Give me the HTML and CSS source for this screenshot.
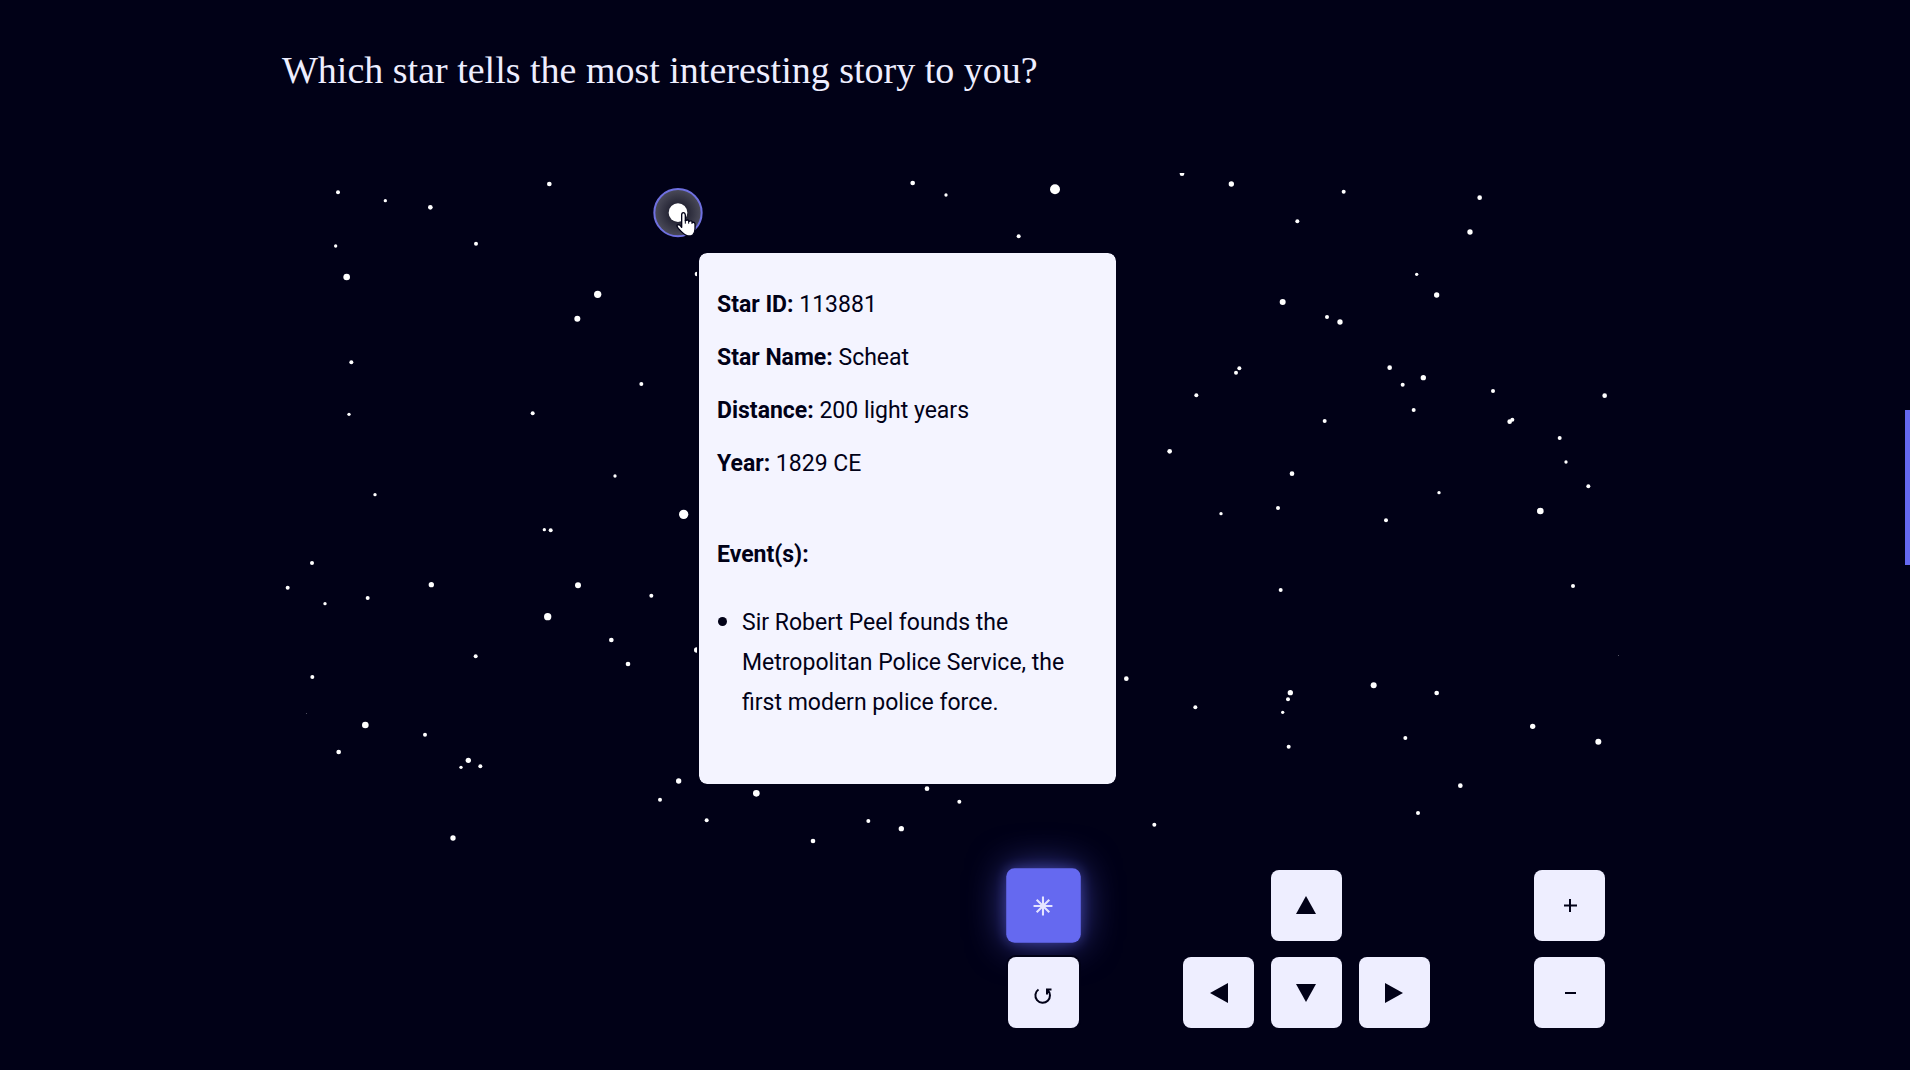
FILE: index.html
```html
<!DOCTYPE html>
<html lang="en">
<head>
<meta charset="utf-8">
<meta name="viewport" content="width=device-width, initial-scale=1">
<title>Star stories</title>
<link rel="stylesheet" href="styles.css">
</head>
<body>
<main class="page">
  <h1 class="question">Which star tells the most interesting story to you?</h1>

  <section class="stage">
    <svg class="sky" viewBox="0 0 4038 2031" aria-label="Star map" role="img">
      <defs>
        <radialGradient id="halo">
          <stop offset="0.35" stop-color="#242434"/>
          <stop offset="1" stop-color="#4c4c5a"/>
        </radialGradient>
      </defs>
      <g class="stars">
        <g transform="translate(-36 -39)">
          <circle cx="204" cy="97" r="6"/><circle cx="346" cy="122" r="5"/><circle cx="481" cy="142" r="7"/><circle cx="838" cy="72" r="7"/>
          <circle cx="197" cy="258" r="5"/><circle cx="618" cy="251" r="6"/><circle cx="230" cy="351" r="10"/><circle cx="983" cy="403" r="11"/>
          <circle cx="922" cy="476" r="9"/><circle cx="244" cy="607" r="6"/><circle cx="1114" cy="672" r="6"/><circle cx="237" cy="763" r="5"/>
          <circle cx="788" cy="760" r="6"/><circle cx="1035" cy="948" r="5"/><circle cx="315" cy="1004" r="5"/><circle cx="1281" cy="342" r="7"/>
        </g>
        <g transform="translate(-36 981)">
          <circle cx="1241" cy="43" r="14"/><circle cx="823" cy="89" r="5"/><circle cx="842" cy="91" r="6"/><circle cx="126" cy="189" r="6"/>
          <circle cx="53" cy="263" r="6"/><circle cx="165" cy="311" r="5"/><circle cx="293" cy="294" r="6"/><circle cx="484" cy="254" r="8"/>
          <circle cx="924" cy="256" r="9"/><circle cx="833" cy="350" r="11"/><circle cx="1144" cy="287" r="6"/><circle cx="1024" cy="420" r="7"/>
          <circle cx="617" cy="469" r="6"/><circle cx="1074" cy="492" r="7"/><circle cx="127" cy="531" r="6"/><circle cx="1280" cy="450" r="8"/>
          <circle cx="110" cy="640" r="1"/><circle cx="286" cy="675" r="10"/><circle cx="465" cy="704" r="6"/><circle cx="206" cy="756" r="7"/>
          <circle cx="595" cy="781" r="8"/><circle cx="573" cy="802" r="5"/><circle cx="631" cy="799" r="6"/><circle cx="1226" cy="843" r="8"/>
          <circle cx="1170" cy="899" r="6"/><circle cx="1310" cy="961" r="6"/><circle cx="549" cy="1014" r="8"/>
        </g>
        <g transform="translate(1224 -39)">
          <circle cx="668" cy="69" r="7"/><circle cx="768" cy="105" r="5"/><circle cx="1095" cy="88" r="15"/><circle cx="986" cy="229" r="6"/>
        </g>
        <g transform="translate(1224 921)">
          <circle cx="199" cy="940" r="10"/><circle cx="711" cy="926" r="7"/><circle cx="808" cy="965" r="6"/><circle cx="535" cy="1023" r="6"/>
          <circle cx="634" cy="1046" r="8"/><circle cx="369" cy="1083" r="7"/>
        </g>
        <g transform="translate(2484 -39)">
          <circle cx="216" cy="41" r="7"/><circle cx="364" cy="72" r="8"/><circle cx="701" cy="95" r="6"/><circle cx="562" cy="184" r="6"/>
          <circle cx="518" cy="426" r="9"/><circle cx="651" cy="471" r="6"/><circle cx="690" cy="486" r="8"/><circle cx="388" cy="625" r="6"/>
          <circle cx="378" cy="638" r="6"/><circle cx="259" cy="706" r="6"/><circle cx="644" cy="783" r="6"/><circle cx="179" cy="874" r="7"/>
          <circle cx="546" cy="941" r="7"/><circle cx="504" cy="1044" r="6"/><circle cx="333" cy="1061" r="5"/>
        </g>
        <g transform="translate(3264 -39)">
          <circle cx="329" cy="113" r="7"/><circle cx="300" cy="216" r="8"/><circle cx="140" cy="343" r="5"/><circle cx="200" cy="405" r="8"/>
          <circle cx="59" cy="623" r="7"/><circle cx="98" cy="674" r="6"/><circle cx="160" cy="653" r="8"/><circle cx="131" cy="750" r="6"/>
          <circle cx="369" cy="693" r="6"/><circle cx="704" cy="707" r="7"/><circle cx="419" cy="785" r="7"/><circle cx="427" cy="779" r="6"/>
          <circle cx="569" cy="834" r="6"/><circle cx="588" cy="906" r="5"/><circle cx="655" cy="979" r="6"/><circle cx="207" cy="998" r="5"/>
          <circle cx="511" cy="1053" r="10"/>
        </g>
        <g transform="translate(2484 1041)">
          <circle cx="828" cy="1" r="6"/><circle cx="512" cy="210" r="6"/><circle cx="1389" cy="198" r="6"/><circle cx="1525" cy="407" r="1"/>
          <circle cx="49" cy="476" r="7"/><circle cx="256" cy="562" r="6"/><circle cx="541" cy="518" r="8"/><circle cx="534" cy="538" r="6"/>
          <circle cx="518" cy="577" r="5"/><circle cx="791" cy="496" r="9"/><circle cx="980" cy="519" r="7"/><circle cx="536" cy="680" r="6"/>
          <circle cx="886" cy="654" r="6"/><circle cx="1268" cy="619" r="8"/><circle cx="1465" cy="665" r="9"/><circle cx="1051" cy="797" r="7"/>
          <circle cx="924" cy="879" r="6"/><circle cx="133" cy="914" r="6"/>
        </g>
      </g>
      <g transform="translate(1188 119)">
        <circle r="71" fill="url(#halo)" stroke="#6f70e0" stroke-width="6"/>
        <circle r="28" fill="#fff"/>
        <path d="M11 37V7q0-7 5-7t6 7v17q8-5 11 2q8-4 10 3q9-2 8 8v12q0 10-6 17q-9 7-20 2Q16 64 1 47q-8-10 0-11q5 0 10 8z" fill="#fff" stroke="#020218" stroke-width="4" stroke-linejoin="round"/>
        <path d="M22 22v11M32 25v8M42 28v6" stroke="#020218" stroke-width="3"/>
      </g>
    </svg>

    <article class="card">
      <p class="fact"><strong>Star ID:</strong> 113881</p>
      <p class="fact"><strong>Star Name:</strong> Scheat</p>
      <p class="fact"><strong>Distance:</strong> 200 light years</p>
      <p class="fact"><strong>Year:</strong> 1829 CE</p>
      <h2 class="events-title">Event(s):</h2>
      <ul class="events">
        <li>Sir Robert Peel founds the Metropolitan Police Service, the first modern police force.</li>
      </ul>
    </article>
  </section>

  <div class="controls">
    <button class="key key-star active" type="button" aria-label="Show stars"><svg class="icon" viewBox="0 0 24 24"><path class="line" d="M12 3v18M3 12h18M6 6l12 12M18 6L6 18"/></svg></button>
    <button class="key key-up" type="button" aria-label="Move up"><svg class="icon" viewBox="0 0 24 24"><path d="M12 2L22 20H2z"/></svg></button>
    <button class="key key-plus" type="button" aria-label="Zoom in"><svg class="icon" viewBox="0 0 24 24"><path class="line" d="M12 5v13M6 11.500h13"/></svg></button>
    <button class="key key-reset" type="button" aria-label="Reset view"><svg class="icon" viewBox="0 0 24 24"><path class="line" d="M7.500 8.500A7.300 7.300 0 1 0 16.500 9M20.500 8.500h-4.500v5"/></svg></button>
    <button class="key key-left" type="button" aria-label="Move left"><svg class="icon" viewBox="0 0 24 24"><path d="M3 12L21 2v20z"/></svg></button>
    <button class="key key-down" type="button" aria-label="Move down"><svg class="icon" viewBox="0 0 24 24"><path d="M12 21L2 3h20z"/></svg></button>
    <button class="key key-right" type="button" aria-label="Move right"><svg class="icon" viewBox="0 0 24 24"><path d="M21 12L3 2v20z"/></svg></button>
    <button class="key key-minus" type="button" aria-label="Zoom out"><svg class="icon" viewBox="0 0 24 24"><path class="line" d="M7 12h11"/></svg></button>
  </div>
</main>
<div class="progress"></div>
</body>
</html>
```
FILE: styles.css
```css
* {
  box-sizing: border-box;
}

body {
  margin: 0;
  background: #010117;
  color: #eeeeff;
  font-family: Roboto, "Liberation Sans", sans-serif;
}

.page {
  max-width: 1346px;
  margin: 0 auto;
  padding: 46px 0 40px;
}

.question {
  margin: 0 0 79px;
  font: 400 38px/48px "Liberation Serif", serif;
}

.stage {
  position: relative;
}

.sky {
  display: block;
  width: 100%;
  height: auto;
}

.stars {
  fill: #fff;
}

/* Details of the hovered star */
.card {
  position: absolute;
  left: 415px;
  top: 78px;
  width: 421px;
  padding: 32px 18px 61px;
  border: 2px solid #010117;
  border-radius: 10px;
  background: #f4f4ff;
  background-clip: padding-box;
  color: #010117;
  font-size: 23px;
  line-height: 40px;
}

.fact {
  margin: 0 0 13px;
}

.fact strong {
  font-weight: 700;
}

.events-title {
  margin: 51px 0 26px;
  font-size: 23px;
  font-weight: 700;
}

.events {
  margin: 0;
  padding-left: 25px;
}

.events li::marker {
  font-size: 28px;
}

.controls {
  display: grid;
  grid-template-columns: repeat(7, 1fr);
  grid-template-rows: repeat(2, 71px);
  gap: 16px 17px;
  max-width: 597px;
  margin: 20px 23px 0 auto;
}

.key {
  display: flex;
  align-items: center;
  justify-content: center;
  padding: 0;
  border: 0;
  border-radius: 8px;
  background: #eeeeff;
  color: #010117;
}

.key.active {
  background: #6569f0;
  color: #e4e4ff;
  box-shadow: 0 0 36px #6569f099, 0 0 12px #6569f066;
  transform: scale(1.05);
}

.icon {
  width: 24px;
  height: 24px;
  fill: currentColor;
}

.line {
  fill: none;
  stroke: currentColor;
  stroke-width: 2;
}

.key-star { grid-area: 1 / 1; }
.key-up { grid-area: 1 / 4; }
.key-plus { grid-area: 1 / 7; }
.key-left { grid-area: 2 / 3; }
.key-down { grid-area: 2 / 4; }
.key-right { grid-area: 2 / 5; }
.key-minus { grid-area: 2 / 7; }

/* Stays above the glow of the active key */
.key-reset {
  grid-area: 2 / 1;
  z-index: 1;
  box-shadow: 0 0 0 2px #010117;
}

/* Scroll position marker */
.progress {
  position: fixed;
  top: 410px;
  right: 0;
  width: 5px;
  height: 155px;
  background: #6569f0;
}
```
